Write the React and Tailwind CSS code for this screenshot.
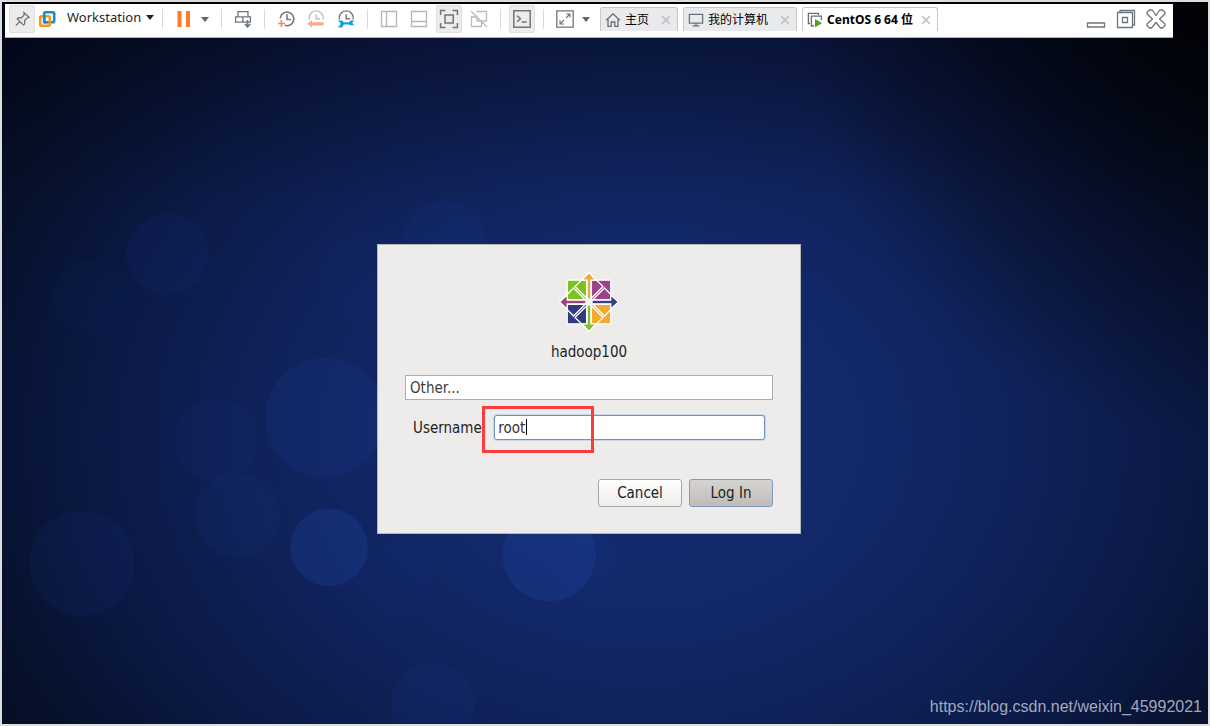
import { useState } from 'react'
import clsx from 'clsx'

const Svg = ({ size = 20, children, className }) => (
  <svg
    width={size}
    height={size}
    viewBox={`0 0 ${size} ${size}`}
    fill="none"
    stroke="currentColor"
    strokeWidth="1.3"
    className={clsx('shrink-0', className)}
    aria-hidden="true"
  >
    {children}
  </svg>
)

const PinIcon = () => (
  <Svg>
    <path d="M12 3.6l5 4.7-1.8.5-2.6 2.7.1 3.4-1.3 1-6.2-6 1.2-1.2 3.1.1 2.6-2.8zM8.2 12.2L3.8 16.6" />
  </Svg>
)

const VmwareIcon = () => (
  <Svg size={18}>
    <rect x="6.2" y="2.2" width="10" height="10" rx="1.5" stroke="#1b8bc9" strokeWidth="2.6" />
    <rect x="2.2" y="6.2" width="9.6" height="9.6" rx="1.5" stroke="#f39a1d" strokeWidth="2.6" />
    <path d="M6.2 5v7.2H9" stroke="#1b8bc9" strokeWidth="2.6" />
  </Svg>
)

const CaretIcon = ({ className }) => (
  <svg width="8" height="5" viewBox="0 0 8 5" fill="currentColor" className={className} aria-hidden="true">
    <path d="M0 0h8L4 5z" />
  </svg>
)

const PauseIcon = () => (
  <Svg className="text-[#ff7a2b]">
    <path d="M5.5 2v16M14 2v16" strokeWidth="4" />
  </Svg>
)

const SendKeysIcon = () => (
  <Svg>
    <path d="M5 2.6h10v5.2H5zM2.6 7.8h7.2v5.4H2.6zM9.8 7.8h7.6v5.4H9.8z" />
    <path d="M14.5 11v6.5M11.8 15l2.7 2.8 2.7-2.8" strokeWidth="1.6" />
  </Svg>
)

const ClockAddIcon = () => (
  <Svg>
    <path d="M4.2 9.5a6.8 6.8 0 1 1 4.6 6.8M11 5.2v5.2h3.8" strokeWidth="1.5" />
    <path d="M5.4 11v7M2 14.5h7" stroke="#f58a55" strokeWidth="1.6" />
  </Svg>
)

const ClockBackIcon = () => (
  <Svg className="text-[#b9bcc0]">
    <path d="M3.4 10.5a7 7 0 1 1 13.6 0M10.2 5.2v4.6h3.6" strokeWidth="1.4" />
    <path d="M1.5 14.8l4.5-3.8v2.2h11.5v3.2H6v2.2z" fill="#fbab83" stroke="none" />
  </Svg>
)

const ClockWrenchIcon = () => (
  <Svg>
    <path d="M3.4 10.5a7 7 0 1 1 13.6 0M10.2 5.2v4.6h3.6" strokeWidth="1.4" />
    <path
      d="M1.6 11.4H6.2l1.6 1.8h5l1.7-1.6h3.7l-2 2.2 2 2.4h-3.9l-1.5-.6H8l-1.8 2.8H1.6l2.6-2.4v-2.6z"
      fill="#16a3d6"
      stroke="none"
    />
  </Svg>
)

const SidebarIcon = () => (
  <Svg className="text-[#b4b7ba]">
    <path d="M2.5 2.5h15v15h-15zM7.5 2.5v15" />
  </Svg>
)

const ThumbnailBarIcon = () => (
  <Svg className="text-[#b4b7ba]">
    <path d="M2.5 2.5h15v15h-15zM2.5 12.5h15" />
  </Svg>
)

const FullScreenIcon = () => (
  <Svg>
    <path d="M6 5.9h8.2v8.2H6zM1.6 6V1.6H6.4M13.6 1.6h4.8V6M18.4 14v4.4h-4.8M6.4 18.4H1.6V14" strokeWidth="1.5" />
  </Svg>
)

const UnityIcon = () => (
  <Svg className="text-[#b9bcbf]">
    <path d="M7.5 2.5h10V12H8V6.500M12.500 12v5.500h-10V8h5M2 2l16 16" />
  </Svg>
)

const ConsoleIcon = () => (
  <Svg>
    <path d="M1.8 1.8h16.4v16.4H1.8zM5.2 6.8l3.2 3-3.2 3M9.6 13h5" strokeWidth="1.5" />
  </Svg>
)

const StretchIcon = () => (
  <Svg>
    <path d="M1.8 1.8h16.4v16.4H1.8z" />
    <path d="M5 15l4-4M11 9l4-4M5 11.2V15h3.8M11.2 5H15v3.8" strokeWidth="1.1" />
  </Svg>
)

const HomeIcon = () => (
  <Svg size={16}>
    <path d="M1.2 8.2L8 1.8l6.8 6.4M3 7v7.4h3.2V10h3.6v4.4H13V7" />
  </Svg>
)

const MonitorIcon = () => (
  <Svg size={16}>
    <path d="M1.4 2.4h13.2v8.8H1.4zM8 11.2v2.4M4.6 13.8h6.8" />
  </Svg>
)

const RunningVmIcon = () => (
  <Svg size={16}>
    <path d="M3 11.5H1.4V1.4h10V3M7 14H4.4V4.2h10V8" />
    <path d="M8 7l7 4.2L8 15.2z" fill="#4f9f1f" stroke="none" />
  </Svg>
)

const CloseIcon = () => (
  <svg width="10" height="10" viewBox="0 0 10 10" stroke="#c3c5c8" strokeWidth="1.8" aria-hidden="true">
    <path d="M1.2 1.2l7.6 7.6M8.8 1.2L1.2 8.8" />
  </svg>
)

const CentosLogo = () => (
  <svg width="60" height="60" viewBox="-31 -31 62 62" aria-label="CentOS" role="img">
    <g stroke="#fff" strokeWidth="1.3">
      <path d="M-22.5-22.5h20v20h-20z" fill="#7cc220" />
      <path d="M2.5-22.5h20v20h-20z" fill="#9c4288" />
      <path d="M-22.5 2.5h20v20h-20z" fill="#33387f" />
      <path d="M2.5 2.5h20v20h-20z" fill="#f4a92f" />
      <path
        d="M0-30L-14.5-16 0-1.5 14.5-16zM-30 0L-16-14.5-1.5 0-16 14.5zM0 30L-14.5 16 0 1.5 14.5 16zM30 0L16-14.5 1.5 0 16 14.5z"
        fill="none"
      />
      <path d="M-1.9-3V-22.5h-5.4L0-30.5l7.3 8H1.9V-3z" fill="#eda83c" />
      <path d="M-1.9 3V22.5h-5.4L0 30.5l7.3-8H1.9V3z" fill="#80c331" />
      <path d="M-3-1.9H-22.5v-5.4L-30.5 0l8 7.3V1.9H-3z" fill="#98447f" />
      <path d="M3-1.9H22.5v-5.4L30.5 0l-8 7.3V1.9H3z" fill="#393f86" />
    </g>
    <circle r="3.6" fill="#f4f4f6" />
  </svg>
)

const ToolButton = ({ label, active, children }) => (
  <button
    type="button"
    aria-label={label}
    className={clsx(
      'flex h-7 w-[26px] items-center justify-center rounded-[3px] text-[#6d757d]',
      active && 'bg-[#ececed] ring-1 ring-inset ring-[#e0e0e1]'
    )}
  >
    {children}
  </button>
)

const CaretButton = ({ label }) => (
  <button type="button" aria-label={label} className="flex h-7 w-4 items-center justify-center text-[#5c6670]">
    <CaretIcon />
  </button>
)

const Separator = () => <span className="mx-2 h-5 w-px bg-[#d9dadb]" />

const Tab = ({ icon, title, active }) => (
  <div
    className={clsx(
      'flex h-6 items-center rounded-t-[3px] border border-b-0 border-[#c6c7c9] pl-1 pr-1.5',
      active ? 'gap-2 bg-white font-bold' : 'gap-3 bg-[#e9eaeb]'
    )}
  >
    <button type="button" className="flex items-center gap-1 whitespace-nowrap text-[12px] leading-4 text-black">
      <span className="text-[#66707a]">{icon}</span>
      {title}
    </button>
    <button type="button" aria-label={`Close ${title}`}>
      <CloseIcon />
    </button>
  </div>
)

const Toolbar = () => (
  <header className="relative ml-[3px] mr-[35px] flex h-[34px] items-start border-b border-[#a9afc0] bg-white pl-1 pr-1 pt-px">
    <div className="flex items-center">
      <ToolButton label="Pin toolbar" active>
        <PinIcon />
      </ToolButton>
      <span className="ml-[3px]">
        <VmwareIcon />
      </span>
      <button type="button" className="ml-[11px] flex w-[87px] items-center justify-between pb-1 text-[13px] leading-4 text-[#1f1f1f]">
        Workstation
        <CaretIcon className="text-[#222]" />
      </button>
      <Separator />
      <ToolButton label="Suspend">
        <PauseIcon />
      </ToolButton>
      <CaretButton label="Power options" />
      <Separator />
      <ToolButton label="Send Ctrl+Alt+Del">
        <SendKeysIcon />
      </ToolButton>
      <Separator />
      <div className="flex gap-1">
        <ToolButton label="Take snapshot">
          <ClockAddIcon />
        </ToolButton>
        <ToolButton label="Revert snapshot">
          <ClockBackIcon />
        </ToolButton>
        <ToolButton label="Manage snapshots">
          <ClockWrenchIcon />
        </ToolButton>
      </div>
      <Separator />
      <div className="flex gap-1">
        <ToolButton label="Show library">
          <SidebarIcon />
        </ToolButton>
        <ToolButton label="Show thumbnails">
          <ThumbnailBarIcon />
        </ToolButton>
        <ToolButton label="Full screen" active>
          <FullScreenIcon />
        </ToolButton>
        <ToolButton label="Unity">
          <UnityIcon />
        </ToolButton>
      </div>
      <Separator />
      <ToolButton label="Console view" active>
        <ConsoleIcon />
      </ToolButton>
      <Separator />
      <ToolButton label="Stretch guest">
        <StretchIcon />
      </ToolButton>
      <CaretButton label="Stretch options" />
    </div>

    <nav className="ml-1.5 mt-0.5 flex gap-[5px]">
      <Tab icon={<HomeIcon />} title="主页" />
      <Tab icon={<MonitorIcon />} title="我的计算机" />
      <Tab icon={<RunningVmIcon />} title="CentOS 6 64 位" active />
    </nav>

    <div className="ml-auto flex gap-1">
      <ToolButton label="Minimize">
        <Svg>
          <path d="M1.5 14h17v4h-17z" />
        </Svg>
      </ToolButton>
      <ToolButton label="Restore">
        <Svg>
          <path d="M1.5 3.5h15v15h-15zM4 3.5v-2h14.5V16h-2M6.5 8.5h5v5h-5z" />
        </Svg>
      </ToolButton>
      <ToolButton label="Close">
        <Svg>
          <path d="M3.5 1h2.800L10 6.500 13.700 1h2.800L19 3.500v1.500L13.500 10l5.500 5v1.500L16.500 19h-2L10 13.500 5.500 19h-2L1 16.500V15l5.500-5L1 5V3.500z" strokeLinejoin="round" />
        </Svg>
      </ToolButton>
    </div>
  </header>
)

// soft discs of the CentOS 6 wallpaper
const bokeh = [
  { x: 166, y: 254, r: 41, o: 0.09 },
  { x: 87, y: 297, r: 37, o: 0.04 },
  { x: 444, y: 241, r: 41, o: 0.1 },
  { x: 365, y: 275, r: 45, o: 0.04 },
  { x: 324, y: 418, r: 60, o: 0.14 },
  { x: 215, y: 440, r: 42, o: 0.06 },
  { x: 236, y: 516, r: 43, o: 0.08 },
  { x: 328, y: 548, r: 39, o: 0.28 },
  { x: 80, y: 564, r: 53, o: 0.09 },
  { x: 549, y: 555, r: 47, o: 0.28 },
  { x: 585, y: 560, r: 30, o: 0.05 },
  { x: 390, y: 580, r: 40, o: 0.04 },
  { x: 432, y: 706, r: 42, o: 0.1 },
]

const Wallpaper = () => (
  <svg
    className="absolute inset-0 h-full w-full"
    viewBox="0 0 1210 726"
    preserveAspectRatio="xMidYMid slice"
    aria-hidden="true"
  >
    {bokeh.map((b) => (
      <circle key={`${b.x}-${b.y}`} cx={b.x} cy={b.y} r={b.r} fill="#2148a8" fillOpacity={b.o} />
    ))}
  </svg>
)

const LoginDialog = () => {
  const [username, setUsername] = useState('root')

  return (
    <form
      onSubmit={(e) => e.preventDefault()}
      className="relative w-[424px] border border-[#b5b5b8] bg-[#edeceb] px-[27px] pb-[26px] pt-[27px] text-[15px] leading-4 text-[#222]"
    >
      <div className="flex flex-col items-center gap-3">
        <CentosLogo />
        <h1>hadoop100</h1>
      </div>

      <button type="button" className="mt-[15px] block h-[25px] w-full border border-[#aeaeae] bg-white px-1 text-left text-[#3c3c3c]">
        Other...
      </button>

      <div className="mt-[15px] flex items-center gap-2 px-2">
        <label htmlFor="username">Username:</label>
        <div className="relative flex-1">
          <input
            id="username"
            value={username}
            onChange={(e) => setUsername(e.target.value)}
            className="block h-[25px] w-full rounded-[3px] border border-[#6e93c0] bg-white px-[3px] text-[#333] outline-none ring-1 ring-[#c9d6e6]"
          />
          <span className="absolute left-8 top-1 h-4 w-px bg-black" />
          <span className="pointer-events-none absolute -left-3 -top-[9px] h-[47px] w-28 border-3 border-[#fb3b3c]" />
        </div>
      </div>

      <div className="mt-[39px] flex justify-end gap-[7px]">
        <button
          type="button"
          className="h-7 w-[84px] rounded-[3px] border border-[#a9a8a6] bg-linear-to-b from-white to-[#ededec]"
        >
          Cancel
        </button>
        <button
          type="submit"
          className="h-7 w-[84px] rounded-[3px] border border-[#7f9abf] bg-linear-to-b from-[#d6d4d2] to-[#bfbcb8]"
        >
          Log In
        </button>
      </div>
    </form>
  )
}

export default function App() {
  return (
    <div className="relative flex min-h-screen flex-col border-2 border-[#dcdddd] bg-[#01040d] bg-[radial-gradient(ellipse_34%_60%_at_100%_0%,rgba(0,0,0,0.8)_0%,rgba(0,0,0,0.45)_45%,transparent_100%),linear-gradient(to_bottom,rgba(0,2,12,0.3)_0%,transparent_28%),radial-gradient(ellipse_58%_76%_at_53%_60%,#142e75_0%,#122869_32%,#0f2158_56%,#0a1842_80%,#061029_100%,#020817_120%,#01030a_140%)] pt-0.5 font-['Noto_Sans','Noto_Sans_CJK_SC',sans-serif]">
      <Wallpaper />
      <span className="absolute inset-x-0 top-0 h-0.5 bg-black" />
      <Toolbar />
      <main className="relative flex flex-1 items-center justify-center pr-8 pt-4 font-['DejaVu_Sans_Condensed','DejaVu_Sans',sans-serif]">
        <LoginDialog />
      </main>
      <a
        href="https://blog.csdn.net/weixin_45992021"
        className="absolute bottom-[7px] right-1.5 font-['Liberation_Sans',sans-serif] text-[16px] leading-5 text-[#a3a9ba]"
      >
        https://blog.csdn.net/weixin_45992021
      </a>
    </div>
  )
}
